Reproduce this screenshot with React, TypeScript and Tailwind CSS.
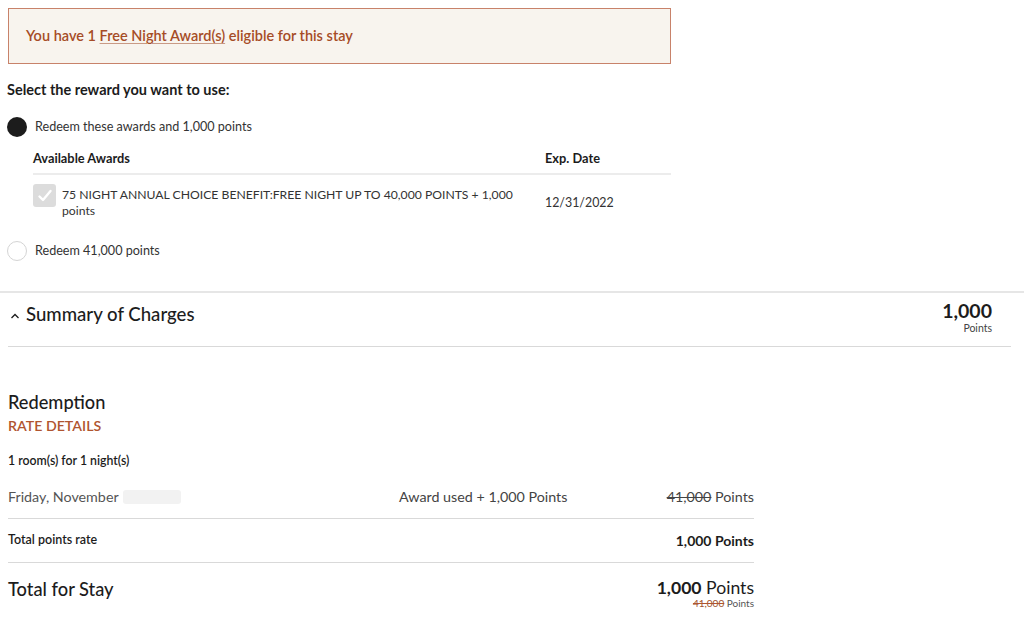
import React from "react";

function Radio({ checked }: { checked: boolean }) {
  return checked ? (
    <span className="block w-[20px] h-[20px] rounded-full bg-[#1c1c1c] shrink-0" />
  ) : (
    <span className="block w-[20px] h-[20px] rounded-full border border-[#d4d4d4] bg-white shrink-0" />
  );
}

export default function App() {
  return (
    <div className="w-[1024px] h-[624px] bg-white text-[#1c1c1c] overflow-hidden" style={{ fontFamily: "Lato, 'Liberation Sans', sans-serif" }}>
      <div className="pl-[8px] pt-[8px] w-[671px]">
        <div className="h-[56px] border border-[#c8826a] bg-[#f8f4ee] flex items-center pl-[17px] text-[14.5px] font-semibold text-[#a64c26]">
          <span>
            You have 1 <span className="underline underline-offset-2 decoration-[#c99a85]">Free Night Award(s)</span> eligible for this stay
          </span>
        </div>
      </div>

      <div className="pl-[7px] w-[671px]">
        <div className="mt-[16px] text-[14.5px] font-bold leading-[20px]">Select the reward you want to use:</div>

        <div className="mt-[17px] flex items-center gap-[8px] h-[20px]">
          <Radio checked />
          <span className="text-[12.6px] text-[#333]">Redeem these awards and 1,000 points</span>
        </div>

        <div className="ml-[26px] mt-[13px]">
          <div className="flex text-[12.8px] font-bold leading-[16px] pb-[7px] border-b-2 border-[#ececec]">
            <span className="w-[512px]">Available Awards</span>
            <span>Exp. Date</span>
          </div>
          <div className="flex items-start mt-[9px]">
            <div className="w-[512px] flex items-start gap-[6px]">
              <span className="w-[23px] h-[23px] rounded-[3px] bg-[#dcdcdc] flex items-center justify-center shrink-0">
                <svg width="16" height="16" viewBox="0 0 16 16" fill="none">
                  <path d="M2.5 8.5 L6 12 L13.5 3" stroke="white" strokeWidth="2.4" strokeLinecap="round" strokeLinejoin="round" />
                </svg>
              </span>
              <span className="text-[12.2px] leading-[16px] text-[#333] pt-[3px] w-[470px]">
                75 NIGHT ANNUAL CHOICE BENEFIT:FREE NIGHT UP TO 40,000 POINTS + 1,000 points
              </span>
            </div>
            <span className="text-[12.4px] leading-[18px] text-[#333] pt-[10px]">12/31/2022</span>
          </div>
        </div>

        <div className="mt-[22px] flex items-center gap-[8px] h-[20px]">
          <Radio checked={false} />
          <span className="text-[12.6px] text-[#333]">Redeem 41,000 points</span>
        </div>
      </div>

      <div className="mt-[30px] border-t-2 border-[#e6e6e6]">
        <div className="mx-[8px] w-[1003px] border-b border-[#d9d9d9] flex items-start justify-between h-[54px]">
          <div className="flex items-center gap-[6px] pt-[9px] pl-[2px]">
            <svg width="10" height="8" viewBox="0 0 10 8" fill="none" className="mt-[4px]">
              <path d="M1.5 6 L5 2.5 L8.5 6" stroke="#1c1c1c" strokeWidth="1.3" />
            </svg>
            <span className="text-[18.6px] font-medium leading-[24px]">Summary of Charges</span>
          </div>
          <div className="flex flex-col items-end pr-[19px] pt-[7px]">
            <span className="text-[19.5px] font-bold leading-[22px]">1,000</span>
            <span className="text-[10.5px] text-[#444] leading-[12px]">Points</span>
          </div>
        </div>
      </div>

      <div className="pl-[8px] w-[754px]">
        <div className="mt-[44px] text-[18.2px] font-medium leading-[22px]">Redemption</div>
        <div className="mt-[4px] text-[14.2px] font-semibold text-[#b05530] leading-[18px]">RATE DETAILS</div>
        <div className="mt-[19px] text-[12.3px] font-semibold leading-[14px]">1 room(s) for 1 night(s)</div>

        <div className="mt-[18px] flex items-center h-[22px] text-[14.3px] text-[#555]">
          <span className="w-[391px] flex items-center">
            Friday, November
            <span className="ml-[4px] inline-block w-[58px] h-[14px] rounded-[3px] bg-[#f2f2f2]" />
          </span>
          <span className="text-[#444]">Award used + 1,000 Points</span>
          <span className="ml-auto text-[#444]"><span className="line-through">41,000</span> Points</span>
        </div>
        <div className="mt-[10px] border-t border-[#d9d9d9]" />
        <div className="flex items-center h-[43px] justify-between">
          <span className="text-[12.5px] font-semibold">Total points rate</span>
          <span className="text-[14px] font-bold">1,000 Points</span>
        </div>
        <div className="border-t border-[#d9d9d9]" />
        <div className="flex items-start justify-between pt-[15px]">
          <span className="text-[18.3px] font-medium leading-[22px]">Total for Stay</span>
          <div className="flex flex-col items-end">
            <span className="text-[17.6px] leading-[20px]"><span className="font-bold">1,000</span> Points</span>
            <span className="text-[10px] leading-[11px] text-[#555]"><span className="line-through text-[#a0522d] decoration-[#b05530]">41,000</span> Points</span>
          </div>
        </div>
      </div>
    </div>
  );
}
